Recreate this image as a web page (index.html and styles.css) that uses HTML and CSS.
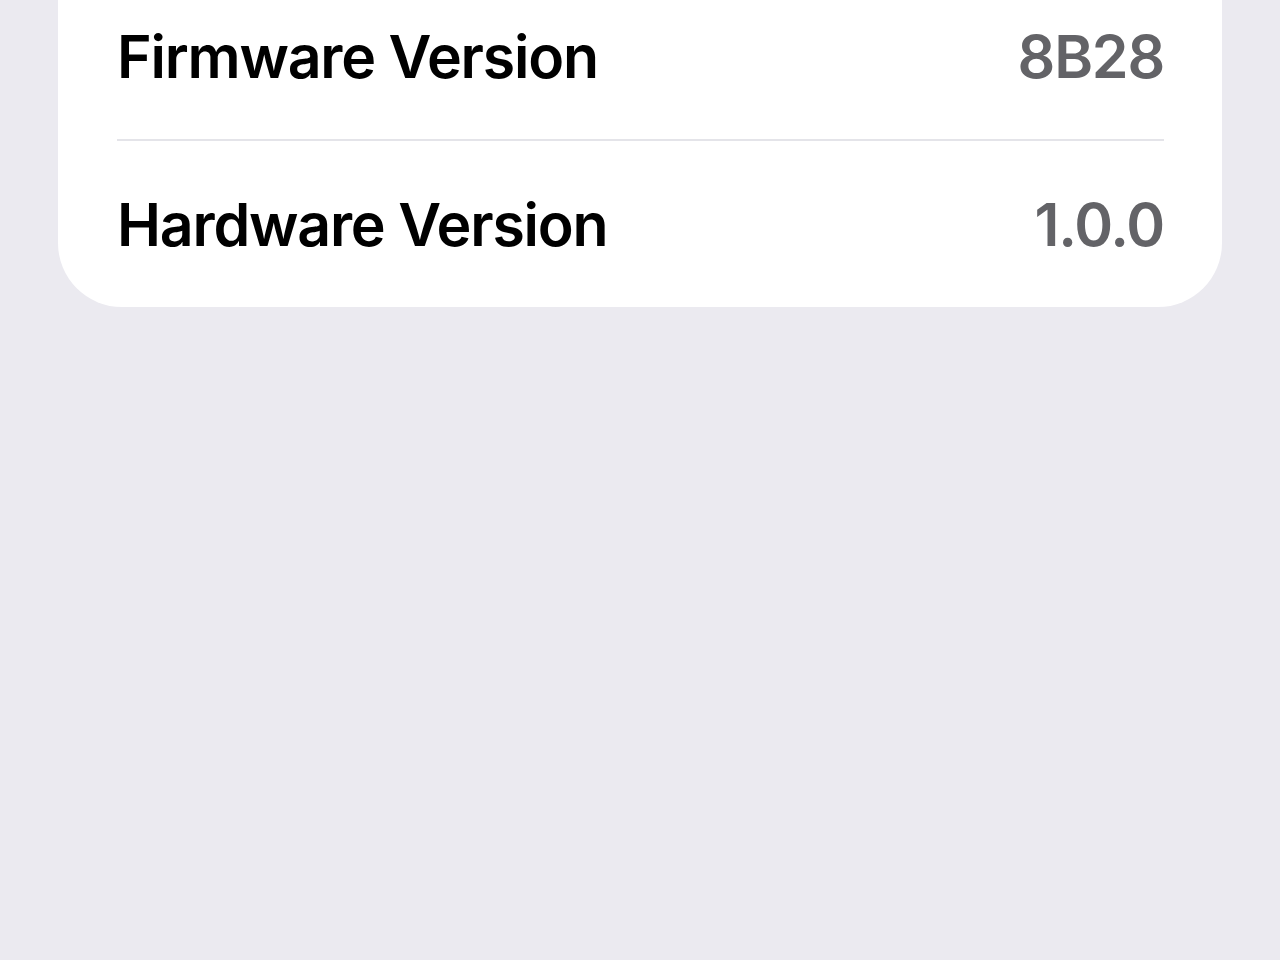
FILE: index.html
```html
<!DOCTYPE html>
<html lang="en">
<head>
<meta charset="utf-8">
<title>About</title>
<link rel="stylesheet" href="styles.css">
</head>
<body>
<main class="page">
  <section class="card">
    <div class="row">
      <span class="label">Firmware Version</span>
      <span class="value">8B28</span>
    </div>
    <div class="row">
      <span class="label">Hardware Version</span>
      <span class="value">1.0.0</span>
    </div>
  </section>
</main>
</body>
</html>
```

FILE: styles.css
```css
html, body {
  margin: 0;
  padding: 0;
  background: #ebeaf0;
  height: 100%;
}

body {
  font-family: Inter, "Noto Sans", "Liberation Sans", sans-serif;
  -webkit-font-smoothing: antialiased;
}

.page {
  padding: 0 58px;
}

.card {
  background: #ffffff;
  border-radius: 0 0 64px 64px;
  margin-top: -26px;
  padding: 0 58px 0 59px;
}

.row {
  height: 165px;
  display: flex;
  align-items: center;
  justify-content: space-between;
  font-size: 59px;
  font-weight: 600;
  letter-spacing: -1.2px;
}

.row + .row {
  border-top: 2px solid #e4e4e9;
  height: 166px;
}

.label {
  color: #000000;
}

.value {
  color: #636367;
}
```
